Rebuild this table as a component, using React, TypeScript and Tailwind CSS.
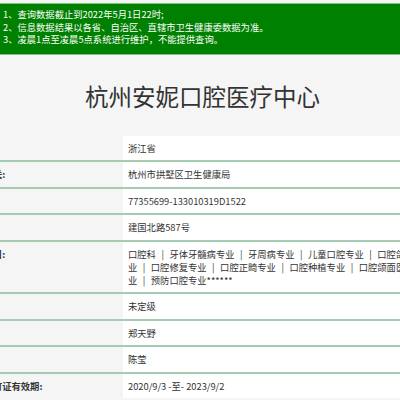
const NOTICE = [
  '1、查询数据截止到2022年5月1日22时;',
  '2、信息数据结果以各省、自治区、直辖市卫生健康委数据为准。',
  '3、凌晨1点至凌晨5点系统进行维护，不能提供查询。',
]

// lines as they wrap in the cell
const SUBJECT_LINES = [
  ['口腔科', '牙体牙髓病专业', '牙周病专业', '儿童口腔专业', '口腔颌面外科专'],
  ['业', '口腔修复专业', '口腔正畸专业', '口腔种植专业', '口腔颌面医学影像专'],
  ['业', '预防口腔专业******'],
]

type Row = { label: string; value: React.ReactNode }

const ROWS: Row[] = [
  { label: '省份:', value: '浙江省' },
  { label: '发证机关:', value: '杭州市拱墅区卫生健康局' },
  { label: '登记号:', value: '77355699-133010319D1522' },
  { label: '地址:', value: '建国北路587号' },
  {
    label: '诊疗科目:',
    value: SUBJECT_LINES.map((parts, li) => (
      <div key={li} className="whitespace-nowrap">
        {parts.map((s, i) => (
          <span key={i}>
            {i > 0 && <span className="inline-block w-[13.5px] text-center">|</span>}
            {s}
          </span>
        ))}
      </div>
    )),
  },
  { label: '级别:', value: '未定级' },
  { label: '法人:', value: '郑天野' },
  { label: '负责人:', value: '陈莹' },
  { label: '执业许可证有效期:', value: '2020/9/3 -至- 2023/9/2' },
]

export default function App() {
  return (
    <div
      className="min-h-screen overflow-hidden bg-[#f5f5f5] pt-[3px]"
      style={{ fontFamily: '"Noto Sans CJK SC", "Noto Sans", sans-serif' }}
    >
      <div className="border-y border-[#7cc47c] bg-[#008000] pb-[8px] pl-[3px] pt-[4px] text-[9.3px] leading-[12.6px] text-white">
        {NOTICE.map((line) => (
          <div key={line} className="whitespace-nowrap">
            {line}
          </div>
        ))}
      </div>

      <h1 className="mt-[24px] pl-[5px] text-center text-[23.5px] leading-[35px] text-[#333]">
        杭州安妮口腔医疗中心
      </h1>

      <div className="-ml-[40px] mt-[22px] w-[491px] text-[9.3px] leading-[13px] text-[#333]">
        {ROWS.map(({ label, value }, i) => (
          <div
            key={label}
            className={`flex ${i < ROWS.length - 1 ? 'border-b-2 border-[#a6cbb2]' : ''}`}
          >
            <div className="w-[163px] shrink-0 whitespace-nowrap bg-[#f5f5f5] pb-[5.5px] pl-[5px] pt-[6px] font-bold">
              {label}
            </div>
            <div className="w-[328px] overflow-hidden bg-white pb-[5.5px] pl-[5px] pr-[5px] pt-[6px]">
              {value}
            </div>
          </div>
        ))}
      </div>
    </div>
  )
}
